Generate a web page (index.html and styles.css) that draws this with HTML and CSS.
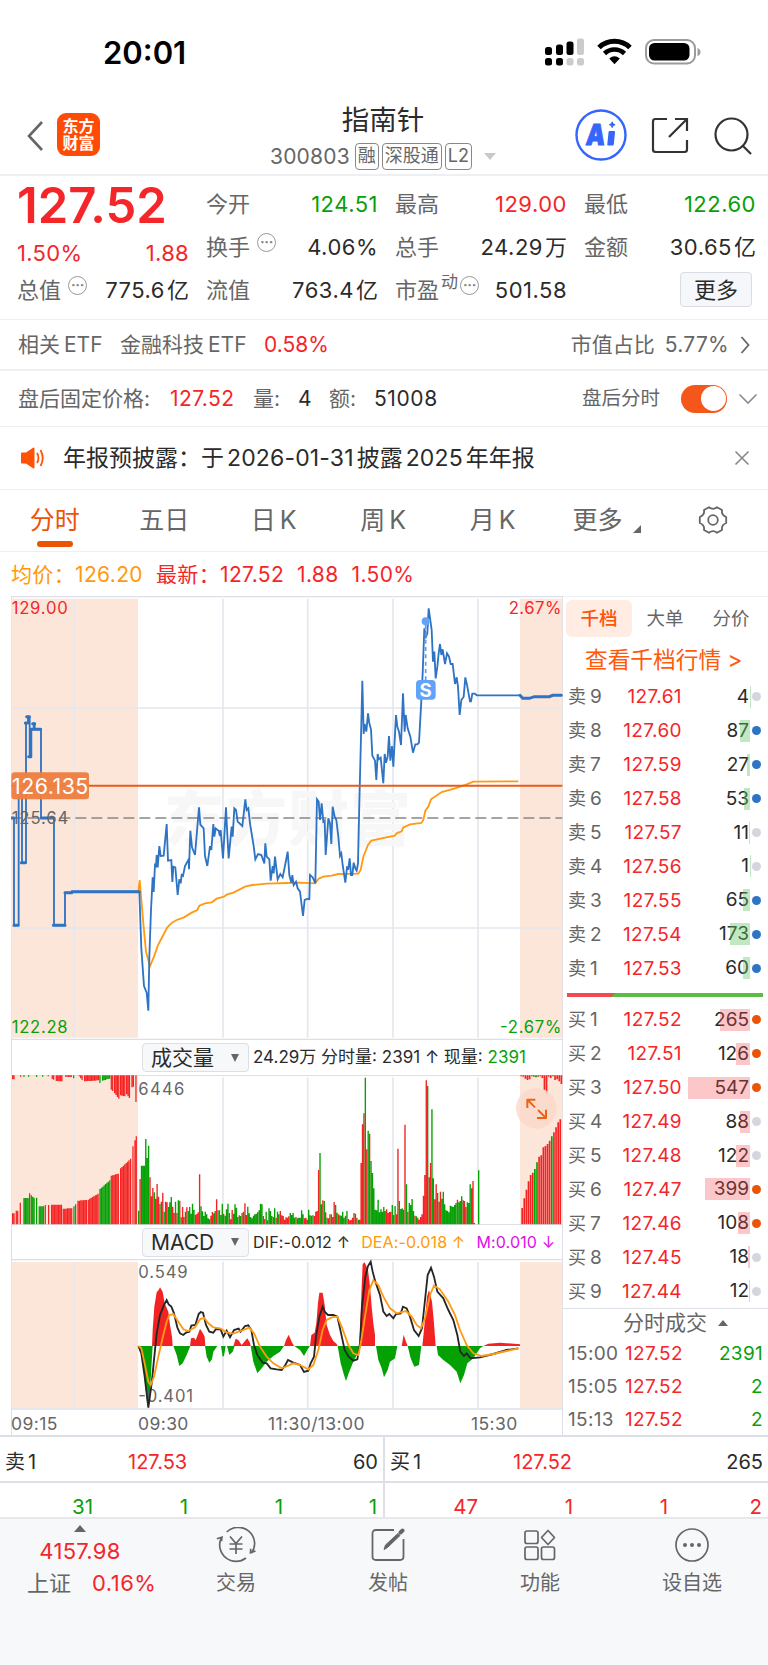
FILE: index.html
```
<!DOCTYPE html>
<html lang="zh-CN">
<head>
  <meta charset="UTF-8">
  <meta name="viewport" content="width=device-width, initial-scale=1.0">
  <title>指南针 300803</title>
  <link rel="stylesheet" href="styles.css">
</head>
<body>
  <div class="status-bar">
    <span class="clock">20:01</span>
    <svg class="status-icons" width="158" height="30" viewBox="0 0 158 30">
      <g fill="#000">
        <rect x="0" y="10" width="7" height="8" rx="2.5"/>
        <rect x="11" y="7.500" width="7" height="10.500" rx="2.500"/>
        <rect x="21.500" y="4.500" width="7" height="13.500" rx="2.500"/>
        <rect x="0" y="21" width="7" height="7.500" rx="2.500"/>
        <rect x="11" y="21" width="7" height="7.500" rx="2.500"/>
      </g>
      <g fill="#cbcbcb">
        <rect x="32" y="1.500" width="7" height="16.500" rx="2.500"/>
        <rect x="21.500" y="21" width="7" height="7.500" rx="2.500"/>
        <rect x="32" y="21" width="7" height="7.500" rx="2.500"/>
      </g>
      <path d="M54 10.500a22.500 22.500 0 0 1 31 0" fill="none" stroke="#000" stroke-width="5"/>
      <path d="M59.500 16.500a14.500 14.500 0 0 1 20 0" fill="none" stroke="#000" stroke-width="4.600"/>
      <path d="M64.200 21.500q5.300-4.500 10.600 0l-5.300 5.700z"/>
      <rect x="101" y="3" width="49" height="23.500" rx="8" fill="none" stroke="#9b9b9b" stroke-width="2"/>
      <rect x="104" y="6" width="40.500" height="17.500" rx="5.500"/>
      <path d="M152.500 11q3 1 3 4t-3 4z" fill="#9b9b9b"/>
    </svg>
  </div>

  <header class="nav-bar">
    <svg class="back" width="18" height="32" viewBox="0 0 18 32"><path d="M16 2L3 16l13 14" fill="none" stroke="#666" stroke-width="2.600"/></svg>
    <div class="logo">东方<br>财富</div>
    <div class="stock-title">
      <h1>指南针</h1>
      <div class="stock-code">
        <span class="code">300803</span>
        <span class="tag">融</span>
        <span class="tag">深股通</span>
        <span class="tag tag-l2">L2</span>
        <i class="caret-down"></i>
      </div>
    </div>
    <div class="nav-actions">
      <svg width="52" height="52" viewBox="0 0 52 52">
        <circle cx="26" cy="26" r="24.500" fill="#fff" stroke="#3565fb" stroke-width="2.400"/>
        <g transform="skewX(-6)">
          <text x="14" y="36" class="ai-text" textLength="19" lengthAdjust="spacingAndGlyphs">A</text>
          <rect x="36" y="22" width="6.500" height="14.500" rx="1" fill="#3565fb"/>
        </g>
        <path d="M37.200 12.800l.9 2 2 .9-2 .9-.9 2-.9-2-2-.9 2-.9z" fill="#3565fb" stroke="#3565fb"/>
      </svg>
      <svg width="38" height="38" viewBox="0 0 38 38" fill="none" stroke="#333" stroke-width="2.200">
        <path d="M16 2H4.500Q2 2 2 4.500v28Q2 35 4.500 35h29q2.500 0 2.500-2.500V23M36 14V2H24M36 2L18 20"/>
      </svg>
      <svg width="38" height="38" viewBox="0 0 38 38" fill="none" stroke="#333" stroke-width="2.200">
        <circle cx="17.500" cy="17.500" r="16"/><path d="M29 29l8 8"/>
      </svg>
    </div>
  </header>

  <section class="quote">
    <div class="quote-main">
      <div class="last-price">127.52</div>
      <div class="change"><span>1.50%</span><span>1.88</span></div>
      <div class="cell"><label>总值<i class="info">···</i></label><b>775.6<u>亿</u></b></div>
    </div>
    <div class="quote-col">
      <div class="cell"><label>今开</label><b class="green">124.51</b></div>
      <div class="cell"><label>换手<i class="info">···</i></label><b>4.06%</b></div>
      <div class="cell"><label>流值</label><b>763.4<u>亿</u></b></div>
    </div>
    <div class="quote-col">
      <div class="cell"><label>最高</label><b class="red">129.00</b></div>
      <div class="cell"><label>总手</label><b>24.29<u>万</u></b></div>
      <div class="cell"><label>市盈<sup>动</sup><i class="info tight">···</i></label><b>501.58</b></div>
    </div>
    <div class="quote-col">
      <div class="cell"><label>最低</label><b class="green">122.60</b></div>
      <div class="cell"><label>金额</label><b>30.65<u>亿</u></b></div>
      <div class="cell end"><button class="more-btn">更多</button></div>
    </div>
  </section>

  <section class="row etf-row">
    <span class="w-etf">相关<u>ETF</u></span>
    <span class="w-etf-name">金融科技<u>ETF</u></span>
    <span class="red">0.58%</span>
    <span class="push">市值占比</span>
    <span class="ratio">5.77%</span>
    <svg class="arrow" width="11" height="20" viewBox="0 0 11 20"><path d="M1.500 2l7 8-7 8" fill="none" stroke="#666" stroke-width="1.800"/></svg>
  </section>

  <section class="row after-row">
    <span class="w-after">盘后固定价格:</span>
    <span class="w-price red">127.52</span>
    <span class="w-vol">量:</span>
    <span class="w-num dark">4</span>
    <span class="w-amt">额:</span>
    <span class="w-total dark">51008</span>
    <span class="push small">盘后分时</span>
    <span class="switch"><i></i></span>
    <svg width="20" height="12" viewBox="0 0 20 12"><path d="M1.500 1.500L10 10l8.500-8.500" fill="none" stroke="#888c99" stroke-width="1.600"/></svg>
  </section>

  <section class="row notice-row">
    <svg width="26" height="22" viewBox="0 0 26 22">
      <path d="M1 6.500q0-1 1-1h4L13 .8q1.500-.8 1.500 1v18.400q0 1.800-1.500 1L6 16.500H2q-1 0-1-1z" fill="#ff5206"/>
      <path d="M17 6q3 5 0 10M20.500 3q4.500 8 0 16" fill="none" stroke="#ff5206" stroke-width="1.800"/>
    </svg>
    <p>年报预披露：于<em>2026-01-31</em>披露<em>2025</em>年年报</p>
    <svg class="push" width="16" height="16" viewBox="0 0 16 16"><path d="M1.500 1.500l13 13M14.500 1.500l-13 13" stroke="#888" stroke-width="1.600"/></svg>
  </section>

  <nav class="tabs">
    <a class="tab active">分时</a>
    <a class="tab">五日</a>
    <a class="tab">日<u>K</u></a>
    <a class="tab">周<u>K</u></a>
    <a class="tab">月<u>K</u></a>
    <a class="tab more">更多<i class="corner"></i></a>
    <a class="gear">
      <svg width="30" height="30" viewBox="0 0 30 30" fill="none" stroke="#666" stroke-width="1.800">
        <path d="M11 2.200Q15 5.500 19 2.200L24 5Q23.200 10 28.200 12v6Q23.200 20 24 25l-5 2.800Q15 24.500 11 27.800L6 25Q6.800 20 1.800 18v-6Q6.800 10 6 5z" stroke-linejoin="round"/>
        <circle cx="15" cy="15" r="4.800"/>
      </svg>
    </a>
  </nav>

  <div class="legend">
    <span class="orange">均价：<em>126.20</em></span>
    <span class="red">最新：<em>127.52</em></span>
    <span class="red">1.88</span>
    <span class="red">1.50%</span>
  </div>

  <main class="market">
    <div class="charts">
      <!-- price -->
      <svg class="pane" width="552" height="444" viewBox="33 18 1656 1332">
        <path d="M34 26H414V1343H34zM1560 26H1687V1343H1560z" class="session"/>
        <path d="M223 26V1343" class="grid thin"/>
        <path d="M669 26V1343M923 26V1343M1179 26V1343M1434 26V1343M34 354H1687M34 1014H1687" class="grid"/>
        <path d="M33 20H1689M33 1348H1689" class="frame"/>
        <text x="493" y="752" class="watermark" textLength="740">东方财富</text>
        <path d="M34 684H1687" class="base"/>
        <polyline class="line-avg" points="415,905 419,870 430,1000 438,1085 450,1128 462,1100 474,1065 490,1035 502,1012 516,998 530,990 552,982 575,968 592,960 598,947 615,940 635,937 650,926 672,920 680,914 700,908 712,902 735,890 757,885 800,881 860,879 900,878 945,880 956,866 970,860 995,857 1015,852 1075,851 1082,840 1090,800 1104,765 1114,752 1145,745 1184,737 1190,730 1205,724 1210,712 1230,703 1264,699 1270,690 1276,662 1285,650 1293,628 1325,606 1365,595 1400,583 1420,575 1555,574"/>
        <path class="line-price" d="M34 684H42V1006H56V605L66 612V818H78V399H84V380H89V500H94V418H101V400H104V418H123V684H162V1006H195V908H215V905H418"/>
        <path class="line-dots" d="M34 684H42M42 1006H54M64 818H76M76 399H84M80 380H88M86 500H92M94 418H122M98 401H104M123 684H162M160 1006H195M195 908H215L217 905H418"/>
        <polyline class="line-price" points="418,905 424,1075 432,1188 440,1208 445,1262 448,1100 453,960 458,862 461,906 465,825 468,828 470,795 473,832 478,768 482,798 491,797 500,702 504,812 514,810 517,876 520,830 526,832 533,915 538,868 542,880 545,855 549,858 555,828 566,808 567,838 571,722 576,772 585,795 597,652 601,704 611,715 615,798 622,828 630,768 634,780 640,702 643,740 647,715 656,722 660,738 662,720 669,805 678,652 682,735 686,805 695,710 698,740 703,655 708,660 713,695 727,708 736,628 740,660 745,655 750,700 761,768 766,808 774,792 784,795 793,820 796,760 800,800 808,808 812,872 818,828 821,850 825,800 833,868 841,852 848,862 856,822 863,785 868,855 874,878 877,855 881,885 888,875 893,895 900,905 909,978 914,930 926,925 928,930 930,855 938,862 946,880 951,628 956,635 960,690 965,640 970,695 974,692 977,795 985,685 990,700 994,762 998,650 1004,680 1009,690 1015,740 1020,798 1024,790 1028,825 1036,878 1041,832 1045,835 1049,805 1053,855 1057,855 1061,818 1066,835 1070,842 1074,820 1078,640 1084,400 1087,272 1091,432 1094,402 1099,425 1104,370 1108,400 1113,418 1117,497 1125,512 1129,570 1133,492 1136,508 1142,503 1150,580 1154,492 1158,518 1163,500 1167,438 1171,512 1176,468 1180,530 1188,375 1192,410 1197,425 1203,465 1209,310 1214,425 1217,375 1223,415 1231,440 1239,488 1246,463 1252,463 1257,458 1263,350 1268,250 1273,115 1278,140 1282,130 1286,55 1295,120 1299,215 1303,185 1307,265 1312,230 1316,190 1320,162 1324,195 1328,178 1335,222 1341,190 1347,200 1352,222 1358,222 1365,282 1370,262 1374,290 1379,375 1384,330 1391,320 1396,262 1402,290 1410,334 1413,334 1417,311 1424,311 1431,316 1560,316"/>
        <polyline class="line-dots" points="1560,316 1568,325 1588,325 1603,320 1648,320 1658,316 1684,316"/>
        <path d="M34 587H1687" class="line-alert"/>
        <text x="35" y="702" class="axis-text" textLength="170">125.64</text>
        <rect x="34" y="547" width="233" height="81" rx="10" class="alert-box"/>
        <text x="36" y="612" class="alert-text" textLength="229">126.135</text>
        <text x="35" y="72" class="axis-text up" textLength="168">129.00</text>
        <text x="1526" y="72" class="axis-text up" textLength="158">2.67%</text>
        <text x="35" y="1329" class="axis-text down" textLength="168">122.28</text>
        <text x="1500" y="1329" class="axis-text down" textLength="184">-2.67%</text>
        <!-- sell marker -->
        <path d="M1277 105V270" class="marker-line"/>
        <circle cx="1277" cy="94" r="12" class="marker"/>
        <rect x="1248" y="270" width="59" height="59" rx="12" class="marker"/>
        <text x="1277" y="320" class="marker-text">S</text>
      </svg>

      <div class="toolbar">
        <button class="picker">成交量<i></i></button>
        <span class="vol-info"><em>24.29</em>万 分时量: <em>2391</em> ↑ 现量: <em class="green">2391</em></span>
      </div>

      <!-- volume -->
      <svg class="pane" width="552" height="150" viewBox="33 103 1656 450">
        <path d="M34 104H414V551H34zM1560 104H1687V551H1560z" class="session"/>
        <path d="M223 110V551" class="grid thin"/>
        <path d="M669 110V551M923 110V551M1179 110V551M1434 110V551" class="grid"/>
        <path d="M33 104H1689M33 552H1689" class="frame"/>
        <path id="volUp" fill="#f42323"/>
        <path id="volDown" fill="#04a004"/>
        <text x="415" y="163" class="axis-text" textLength="138">6446</text>
        <circle cx="1609" cy="203" r="61" class="expand"/>
        <path d="M1582 177H1606M1582 175V202M1583 178L1605 200M1638 207V234M1638 232H1611M1636 230L1614 208" class="expand-arrows"/>
      </svg>

      <div class="toolbar">
        <button class="picker">MACD<i></i></button>
        <span class="macd-info"><span>DIF:-0.012 ↑</span><span class="orange">DEA:-0.018 ↑</span><span class="pink">M:0.010 ↓</span></span>
      </div>

      <!-- macd -->
      <svg class="pane" width="552" height="151" viewBox="33 657 1656 453">
        <path d="M34 666H414V1104H34zM1560 666H1687V1104H1560z" class="session"/>
        <path d="M223 666V1104" class="grid thin"/>
        <path d="M669 666V1104M923 666V1104M1179 666V1104M1434 666V1104" class="grid"/>
        <path d="M33 659H1689M33 1107H1689" class="frame"/>
        <path fill="#f42323" d="M456 918L458 870 463 800 470 757 476 750 480 742 488 755 494 790 505 815 510 855 516 890 518 918zM570 918L573 895 582 893 587 900 595 880 600 866 608 878 614 890 616 918zM700 918L707 896 715 900 725 915 733 905 742 895 750 908 752 918zM852 918L858 900 866 884 875 905 882 918zM930 918L934 885 944 878 949 850 954 788 958 758 968 758 974 795 980 855 990 885 1000 903 1010 912 1013 918zM1078 918L1081 850 1085 740 1088 672 1094 667 1104 690 1110 740 1115 800 1120 850 1125 885V918zM1205 918L1211 884 1217 902 1223 918zM1267 918L1271 880 1276 825 1281 770 1287 750 1296 785 1302 850 1307 918zM1450 918L1465 911 1500 908 1560 913V918z"/>
        <path fill="#04a004" d="M420 918L428 960 436 1040 442 1095 448 1085 452 1020 456 950 458 918zM520 918L530 945 538 978 548 970 560 945 571 918zM615 918L620 950 628 968 636 958 640 935 652 918zM663 918L668 950 672 948 677 918zM681 918L688 945 698 935 704 918zM752 918L760 965 772 1000 785 985 800 965 820 948 840 935 852 918zM883 918L900 930 912 948 925 925 930 918zM1013 918L1022 970 1032 1005 1038 1023 1046 1000 1060 965 1073 940 1078 918zM1128 918L1135 960 1145 985 1152 1012 1163 990 1170 965 1185 955 1192 918zM1223 918L1232 955 1243 980 1257 975 1264 918zM1310 918L1314 945 1330 960 1350 975 1370 995 1381 1030 1392 1005 1402 970 1420 955 1440 925 1450 918z"/>
        <text x="415" y="715" class="axis-text" textLength="148">0.549</text>
        <text x="415" y="1085" class="axis-text" textLength="164">-0.401</text>
        <polyline class="line-dif" points="415,918 424,940 434,1010 445,1103 455,1030 463,950 470,880 480,825 492,795 500,780 506,793 514,800 522,820 532,862 540,880 550,885 558,878 568,875 574,857 586,855 596,822 602,816 609,818 618,855 628,875 640,878 648,867 662,868 670,890 680,872 690,892 702,870 716,866 722,875 735,858 745,856 754,870 762,915 772,945 788,968 800,970 812,985 830,988 845,990 856,975 864,960 880,968 900,975 912,996 925,992 932,970 942,950 948,890 958,830 968,800 974,815 984,825 1000,825 1012,830 1020,865 1034,930 1046,950 1060,962 1072,958 1080,910 1086,800 1096,710 1104,678 1112,665 1118,695 1126,725 1140,765 1150,815 1160,828 1168,822 1180,835 1188,822 1202,820 1209,800 1220,805 1230,830 1242,870 1256,888 1266,865 1275,780 1283,705 1293,683 1302,710 1312,755 1330,775 1345,810 1360,840 1372,885 1381,935 1392,948 1400,940 1412,955 1440,952 1480,942 1520,930 1555,925"/>
        <polyline class="line-avg" points="415,918 424,925 434,970 445,1025 452,1035 462,1010 475,950 490,885 500,845 508,825 520,822 535,845 550,868 565,873 585,862 600,838 612,833 625,850 640,862 660,865 680,877 700,881 725,872 748,863 762,880 780,920 800,950 820,970 845,985 865,977 880,970 900,975 925,988 940,975 955,930 968,870 980,840 995,832 1012,830 1025,860 1045,915 1060,940 1075,945 1084,900 1095,830 1108,750 1120,721 1135,735 1150,770 1170,805 1190,820 1218,813 1235,830 1250,855 1263,865 1275,835 1290,765 1302,737 1320,748 1345,785 1365,825 1380,870 1400,915 1420,940 1445,948 1480,942 1520,933 1555,925"/>
      </svg>

      <div class="time-axis"><span>09:15</span><span>09:30</span><span>11:30/13:00</span><span>15:30</span></div>
    </div>

    <aside class="book">
      <div class="book-tabs"><span class="on">千档</span><span>大单</span><span>分价</span></div>
      <a class="book-link">查看千档行情 &gt;</a>
      <div id="asks" class="levels"></div>
      <div class="ratio-bar"><i></i></div>
      <div id="bids" class="levels"></div>
      <div class="ticks">
        <div class="ticks-head">分时成交<i></i></div>
        <div class="tick"><span>15:00</span><span class="red">127.52</span><span class="green">2391</span></div>
        <div class="tick"><span>15:05</span><span class="red">127.52</span><span class="green">2</span></div>
        <div class="tick"><span>15:13</span><span class="red">127.52</span><span class="green">2</span></div>
      </div>
    </aside>
  </main>

  <section class="best">
    <div class="best-side">
      <div class="best-row"><span>卖<em>1</em></span><span class="red">127.53</span><span>60</span></div>
      <div class="queue green"><span>31</span><span>1</span><span>1</span><span>1</span></div>
    </div>
    <div class="best-side">
      <div class="best-row"><span>买<em>1</em></span><span class="red">127.52</span><span>265</span></div>
      <div class="queue red"><span>47</span><span>1</span><span>1</span><span>2</span></div>
    </div>
  </section>

  <footer class="bottom-nav">
    <div class="index">
      <i class="caret-up"></i>
      <div class="index-value">4157.98</div>
      <div class="index-name"><span>上证</span><span class="red">0.16%</span></div>
    </div>
    <a class="nav-item">
      <svg width="40" height="36" viewBox="0 0 40 36" fill="none" stroke="#666" stroke-width="1.700">
        <path d="M10.700 5A16.400 16.400 0 0 1 35.700 26M39.500 24l-5 1.800.2-4M30 31A16.400 16.400 0 0 1 5 11.500M.8 11.800L6 10.200l-.5 4"/>
        <path d="M14 9.500l6 7 6-7M13.500 17h13M13.500 22h13M20 16.500V27"/>
      </svg>
      <span>交易</span>
    </a>
    <a class="nav-item">
      <svg width="34" height="36" viewBox="0 0 34 36" fill="none" stroke="#666" stroke-width="1.800">
        <path d="M23 3H5Q1.500 3 1.500 6.500v23Q1.500 33 5 33h24q3.500 0 3.500-3.500V12"/>
        <path d="M13 22.500l1.500-4.500L27 6.500l2 2L16.500 20.500z" fill="#666" stroke-width="1"/><path d="M29.500 5.500l2-2" stroke-width="4" stroke-linecap="round"/>
      </svg>
      <span>发帖</span>
    </a>
    <a class="nav-item">
      <svg width="34" height="36" viewBox="0 0 34 36" fill="none" stroke="#666" stroke-width="1.700">
        <rect x="2" y="4" width="13" height="12.500" rx="2"/><rect x="2" y="20" width="13" height="12.500" rx="2"/><rect x="18.500" y="20" width="13" height="12.500" rx="2"/>
        <path d="M25 3.500l6.500 7-6.500 7-6.500-7z" stroke-linejoin="round"/>
      </svg>
      <span>功能</span>
    </a>
    <a class="nav-item">
      <svg width="36" height="36" viewBox="0 0 36 36">
        <circle cx="18" cy="18" r="16" fill="none" stroke="#666" stroke-width="1.700"/>
        <circle cx="11" cy="18" r="2" fill="#666"/><circle cx="18" cy="18" r="2" fill="#666"/><circle cx="25" cy="18" r="2" fill="#666"/>
      </svg>
      <span>设自选</span>
    </a>
  </footer>

  <script src="script.js"></script>
</body>
</html>
```
FILE: script.js
```
// price, quantity, dot colour
const asks = [
  [127.61, 4, 'gray'], [127.60, 87, 'blue'], [127.59, 27, 'blue'],
  [127.58, 53, 'blue'], [127.57, 11, 'gray'], [127.56, 1, 'gray'],
  [127.55, 65, 'blue'], [127.54, 173, 'blue'], [127.53, 60, 'blue']
];
const bids = [
  [127.52, 265, 'orange'], [127.51, 126, 'orange'], [127.50, 547, 'orange'],
  [127.49, 88, 'gray'], [127.48, 122, 'gray'], [127.47, 399, 'orange'],
  [127.46, 108, 'orange'], [127.45, 18, 'gray'], [127.44, 12, 'gray']
];

function renderLevels(id, rows, label, side) {
  document.getElementById(id).innerHTML = rows.map((row, i) => {
    const n = side === 'ask' ? 9 - i : i + 1;
    return `<div class="level ${side}">
      <span class="name">${label}<em>${n}</em></span>
      <span class="price">${row[0].toFixed(2)}</span>
      <span class="qty">${row[1]}<i class="bar" style="width:${(row[1] * 0.114).toFixed(1)}px"></i></span>
      <i class="dot ${row[2]}"></i>
    </div>`;
  }).join('');
}

renderLevels('asks', asks, '卖', 'ask');
renderLevels('bids', bids, '买', 'bid');

// Negative values are falling (green) bars
const minutes = [
  -41, 136, -176, -176, -176, -256, -199, -236, 141, 84, 109, -96, 77, 121, 83, -61, 68, 95, -38, 68,
  66, -52, -66, -82, 53, 34, -68, 34, -72, 71, -21, 52, 22, -38, 51, -40, -52, -32, -62, -44,
  29, 31, 36, 150, -54, -39, -25, -38, -30, -18, -15, 26, 37, -33, -40, 75, -42, 42, -28, -62,
  32, -26, -45, -62, 34, 15, 43, -32, -60, -50, -22, 27, -25, 34, -38, 63, 28, -53, -33, -22,
  -18, -26, -30, -32, 36, -42, -62, -60, 25, 16, -38, 12, -48, -40, -25, 22, -48, 20, -38, -30,
  40, 27, 25, 14, 21, 20, 24, -34, -28, -34, -20, 22, -18, -20, -20, -42, -30, 18, 20, 14,
  -44, -27, 26, -27, 25, 38, 40, 163, -214, -60, 72, -70, 36, -20, 18, 30, -30, 22, 67, -58,
  -35, 30, -27, -26, -38, -20, 26, -40, 16, 12, 14, 20, 34, -32, 20, -14, 14, 184, 300, 333,
  -440, 225, -281, 272, -190, -154, -108, -44, -42, -74, -36, -45, -38, -52, -40, 45, 34, 37, 38, -58,
  28, -55, 30, 227, -70, -46, -48, -44, 299, -120, 38, -64, -58, -76, -40, 26, -24, 20, 14, 22,
  30, 86, 148, 432, -415, 141, 184, -345, -138, 75, 120, -94, 68, 98, -77, -98, -60, -42, -40, -36,
  -56, -54, -52, -58, -64, 74, -66, -70, -84, 72, 70, 52, -66, -64, -120, 108, 130, 4, 0, 0, -162
];

// Call auction bars: [from x, to x, height at start, height at end]
const auction = [
  [36, 46, 33, 33], [47, 57, 41, 41], [59, 63, 65, 65], [70, 85, -79, -79], [87, 90, 93, 93],
  [92, 104, -87, -80], [108, 112, -80, -80], [116, 132, -54, -54], [134, 137, 58, 58], [144, 146, 58, 58],
  [153, 187, 59, 59], [188, 218, 47, 48], [220, 223, -54, -54], [225, 230, 60, 70], [232, 262, 71, 73],
  [263, 297, 74, 92], [298, 330, -106, -132], [332, 358, 146, 152], [360, 388, 168, 192],
  [390, 396, 197, 200], [397, 402, 234, 240], [403, 406, 252, 252], [407, 410, 264, 264]
];
const hanging = [
  [36, 46, 12, 12], [60, 62, 4, 4], [70, 74, -5, -5], [84, 86, -4, -4], [108, 112, -5, -5], [126, 128, -4, -4],
  [143, 147, 3, 3], [155, 165, 11, 13], [167, 187, 17, 18], [195, 216, 4, 5], [219, 223, -9, -9],
  [236, 250, 3, 14], [252, 297, 18, 15], [298, 304, -23, -20], [306, 330, -16, -10], [332, 340, 43, 47],
  [342, 358, 54, 70], [360, 376, 60, 63], [378, 390, 57, 68], [394, 402, 36, 34], [406, 410, 80, 80]
];
const closing = [49, 78, 104, 129, 148, 155, -166, -186, 203, 207, 231, 235, 241, 251, -264, 276, 291, 306, 315];
const closingTop = [3, 4, 10, 14, 12, 3, -4, -6, 4, 3, 8, 44, 54, 4, 8, -3, 14, 12, 18, 26];

let up = '';
let down = '';

function bar(x, width, height, fromTop) {
  const h = Math.abs(height);
  const d = `M${x.toFixed(1)} ${fromTop ? 104 : 551 - h}h${width}v${h}h${-width}z`;
  if (height < 0) {
    down += d;
  } else {
    up += d;
  }
}

function steps(list, fromTop) {
  list.forEach(([from, to, h1, h2]) => {
    const count = Math.max(1, Math.round((to - from) / 4.2));
    for (let i = 0; i < count; i++) {
      bar(from + i * 4.2, 3.8, Math.round(h1 + (h2 - h1) * i / Math.max(1, count - 1)), fromTop);
    }
  });
}

minutes.forEach((h, i) => bar(414 + i * 4.25, 4.1, h));
steps(auction, false);
steps(hanging, true);
closing.forEach((h, i) => bar(1564 + i * 6.35, 5, h));
closingTop.forEach((h, i) => bar(1561 + i * 6.35, 5, h, true));

document.getElementById('volUp').setAttribute('d', up);
document.getElementById('volDown').setAttribute('d', down);
```
FILE: styles.css
```
:root {
  --red: #f4262a;
  --green: #0a9f0a;
  --orange: #ff9a0a;
  --brand: #eb5406;
  --text: #2b2b2b;
  --muted: #666;
  --line: #eeeff2;
  --frame: #dcdfe6;
}

* {
  margin: 0;
  padding: 0;
  box-sizing: border-box;
}

body {
  width: 768px;
  height: 1665px;
  overflow: hidden;
  background: #fff;
  color: var(--muted);
  font-family: Inter, "Noto Sans CJK SC", sans-serif;
  font-size: 21px;
  line-height: 1;
}

em, i, u {
  font-style: normal;
  text-decoration: none;
}

svg { display: block; flex: none; }

.red { color: var(--red) !important; }
.green { color: var(--green) !important; }
.orange { color: var(--orange) !important; }
.pink { color: #e010e6; }
.dark { color: var(--text); }
.push { margin-left: auto; }

/* Status bar */
.status-bar {
  height: 97px;
  padding: 37px 65px 0 103px;
  display: flex;
  justify-content: space-between;
}

.clock {
  color: #000;
  font-size: 31px;
  font-weight: 600;
  line-height: 31px;
}

/* Title bar */
.nav-bar {
  height: 79px;
  border-bottom: 2px solid var(--line);
  display: flex;
  padding-left: 26px;
}

.back { margin-top: 23px; }

.logo {
  flex: none;
  width: 43px;
  height: 43px;
  margin: 16px 0 0 13px;
  padding-top: 5px;
  border-radius: 9px;
  background: #ff4b05;
  color: #fff;
  font-size: 16px;
  font-weight: 700;
  line-height: 17px;
  text-align: center;
}

.stock-title {
  flex: none;
  width: 226px;
  margin-left: 170px;
  white-space: nowrap;
}

.stock-title h1 {
  margin: 8px 0 8px;
  color: #2c2c2c;
  font-size: 27.500px;
  font-weight: 400;
  line-height: 30px;
  text-align: center;
}

.stock-code {
  display: flex;
  align-items: center;
}

.code {
  width: 86px;
  font-size: 21px;
  letter-spacing: .2px;
}

.tag {
  height: 27px;
  margin-right: 3px;
  padding: 0 2px;
  border: 1.500px solid #888;
  border-radius: 4px;
  font-size: 18px;
  line-height: 24px;
}

.tag-l2 { font-size: 18px; }

.caret-down {
  margin-left: 9px;
  border: 6px solid transparent;
  border-top: 7px solid #c9c9c9;
  border-bottom: 0;
}

.nav-actions {
  display: flex;
  margin-left: 79px;
  gap: 24px;
}

.nav-actions svg { margin-top: 20px; }
.nav-actions svg:first-child { margin-top: 12px; }
.nav-actions svg:last-child { margin-left: 1px; }

.ai-text {
  fill: #3565fb;
  stroke: #3565fb;
  stroke-width: 1px;
  font-size: 29px;
  font-weight: 900;
}

/* Quote */
.quote {
  height: 144px;
  padding: 6px 12px 0 17px;
  display: grid;
  grid-template-columns: 172px 172px 172px 172px;
  column-gap: 17px;
  border-bottom: 1px solid var(--line);
}

.cell {
  height: 43px;
  display: flex;
  justify-content: space-between;
  align-items: center;
  white-space: nowrap;
}

.cell label {
  display: flex;
  align-items: center;
  font-size: 22px;
}

.cell b {
  color: var(--text);
  font-size: 22px;
  font-weight: 400;
  letter-spacing: .5px;
}

.cell b u { margin-left: 2px; letter-spacing: 0; }
.cell.end { justify-content: flex-end; }

.cell sup {
  margin: -15px 0 0 2px;
  font-size: 17px;
}

.info {
  width: 19px;
  height: 19px;
  margin: -8px 0 0 7px;
  border: 1.500px solid #999;
  border-radius: 50%;
  color: #888;
  font-size: 14px;
  font-weight: 700;
  line-height: 16px;
  letter-spacing: -.3px;
  text-align: center;
}

.info.tight { margin-left: 2px; }

.last-price {
  height: 50px;
  color: var(--red);
  font-size: 49px;
  font-weight: 600;
  line-height: 48px;
}

.change {
  height: 36px;
  display: flex;
  justify-content: space-between;
  align-items: center;
  padding-top: 5px;
  color: var(--red);
  font-size: 22px;
  letter-spacing: .3px;
}

.more-btn {
  width: 72px;
  height: 35px;
  margin-right: 4px;
  border: 1.500px solid #d9dce2;
  border-radius: 4px;
  background: #f6f7fa;
  color: var(--text);
  font: 22px/30px Inter, "Noto Sans CJK SC", sans-serif;
}

/* Info rows */
.row {
  display: flex;
  align-items: center;
  padding: 0 10px 0 18px;
  border-bottom: 1px solid var(--line);
  font-size: 21px;
  white-space: nowrap;
}

.row u { margin-left: 4px; }

.etf-row { height: 51px; border-bottom-width: 2px; }
.w-etf { width: 102px; }
.w-etf-name { width: 144px; }
.ratio { margin-left: 10px; letter-spacing: .3px; }
.arrow { margin: 0 7px 0 11px; }

.after-row { height: 56px; }
.w-after { width: 152px; }
.w-price { width: 83px; letter-spacing: .4px; }
.w-vol { width: 45px; }
.w-num { width: 31px; }
.w-amt { width: 45px; }
.w-total { letter-spacing: .6px; }
.small { font-size: 19.500px; }

.switch {
  width: 46px;
  height: 28px;
  margin: 0 11px 0 21px;
  padding: 1.500px;
  border-radius: 14px;
  background: #f5571a;
}

.switch i {
  display: block;
  width: 25px;
  height: 25px;
  margin-left: auto;
  border-radius: 50%;
  background: #fff;
}

.notice-row { height: 63px; padding-left: 20px; padding-right: 18px; }

.notice-row p {
  margin-left: 17px;
  color: var(--text);
  font-size: 23px;
}

.notice-row em { margin: 0 3px; letter-spacing: .15px; }

/* Period tabs */
.tabs {
  height: 62px;
  display: flex;
  border-bottom: 1px solid var(--line);
}

.tab {
  width: 109.500px;
  position: relative;
  font-size: 25px;
  line-height: 61px;
  text-align: center;
}

.tab u { margin-left: 4px; }

.tab.more { width: 110px; padding-right: 10px; }

.tab.active { color: var(--brand); }

.tab.active::after {
  content: "";
  position: absolute;
  left: 37px;
  bottom: 4px;
  width: 36px;
  height: 6px;
  border-radius: 3px;
  background: var(--brand);
}

.corner {
  position: absolute;
  right: 17px;
  bottom: 18px;
  border-left: 8px solid transparent;
  border-bottom: 8px solid var(--muted);
}

.gear { margin: 15px 0 0 40px; }

.legend {
  height: 44px;
  display: flex;
  align-items: center;
  padding-left: 11px;
  gap: 13px;
  font-size: 21px;
  letter-spacing: .35px;
  white-space: nowrap;
}

/* Charts */
.market {
  height: 841px;
  display: flex;
  padding-left: 11px;
  border-bottom: 2px solid var(--frame);
}

.charts {
  width: 552px;
  border-left: 1px solid var(--frame);
  border-right: 1px solid var(--frame);
}

.pane { margin-left: -1px; }

.session { fill: #fce6da; }
.grid { stroke: #e4e7ee; stroke-width: 5px; }
.grid.thin { stroke-width: 3px; }
.frame { stroke: #dcdfe6; stroke-width: 4px; }
.base { stroke: #888; stroke-width: 5px; stroke-dasharray: 33 15; }

.watermark {
  fill: #f7f7f8;
  font-size: 182px;
  font-weight: 900;
}

.line-avg, .line-price, .line-dots, .line-dif {
  fill: none;
  stroke-width: 5.500px;
}

.line-avg { stroke: #ff9a12; }
.line-price { stroke: #2f74c4; }
.line-dots { stroke: #2f74c4; stroke-width: 9px; stroke-linecap: round; }
.line-dif { stroke: #262626; }
.line-alert { stroke: #e85b1b; stroke-width: 6px; }

.axis-text {
  fill: #666;
  font-size: 50px;
}

.axis-text.up { fill: var(--red); }
.axis-text.down { fill: var(--green); }

.alert-box { fill: #ee7f41; fill-opacity: .96; }
.alert-text { fill: #fff; font-size: 64px; }

.marker { fill: #62a2f8; }
.marker-line { stroke: #5a9df5; stroke-width: 5px; stroke-dasharray: 12 10; }

.marker-text {
  fill: #fff;
  font-size: 56px;
  font-weight: 700;
  text-anchor: middle;
}

.expand { fill: #fad9c8; fill-opacity: .8; }
.expand-arrows { fill: none; stroke: #ef6113; stroke-width: 6px; }

.toolbar {
  height: 34.500px;
  display: flex;
  align-items: center;
  padding: 1px 0 0 130px;
  white-space: nowrap;
}

.picker {
  width: 107px;
  height: 29px;
  display: flex;
  justify-content: space-between;
  align-items: center;
  padding: 0 9px 0 8px;
  border: 1.500px solid #dcdfe5;
  border-radius: 4px;
  background: #f7f8fa;
  color: var(--text);
  font: 21px/25px Inter, "Noto Sans CJK SC", sans-serif;
}

.picker i {
  border: 4.500px solid transparent;
  border-top: 8px solid #666;
  border-bottom: 0;
}

.vol-info {
  margin-left: 4px;
  color: var(--text);
  font-size: 17px;
}

.macd-info {
  display: flex;
  gap: 11px;
  margin-left: 4px;
  color: var(--text);
  font-size: 16px;
  letter-spacing: .15px;
}

.time-axis {
  height: 28px;
  display: grid;
  grid-template-columns: 127px 130px 203px auto;
  align-items: center;
  margin-left: -1px;
  font-size: 17.500px;
  letter-spacing: .4px;
}

/* Order book */
.book {
  width: 205px;
  border-top: 1px solid var(--line);
}

.book-tabs {
  display: flex;
  height: 40px;
  padding: 3px 0 0 3px;
  font-size: 18.500px;
  line-height: 36px;
  text-align: center;
}

.book-tabs span { width: 66px; }

.book-tabs .on {
  border-radius: 6px;
  background: #ffece3;
  color: #ff5206;
  font-weight: 500;
}

.book-link {
  display: block;
  height: 43px;
  padding-left: 22px;
  color: #ff5a0c;
  font-size: 22.700px;
  line-height: 45px;
  white-space: nowrap;
}

.level {
  height: 33.900px;
  display: flex;
  align-items: center;
  padding-left: 5px;
}

.level .name { width: 40px; font-size: 18px; }
.level .name em { margin-left: 4px; font-size: 19px; }

.level .price {
  width: 74px;
  color: var(--red);
  font-size: 19px;
  letter-spacing: .4px;
  text-align: right;
}

.level .qty {
  width: 67px;
  height: 22px;
  position: relative;
  color: var(--text);
  font-size: 19px;
  line-height: 22px;
  text-align: right;
}

.bar {
  position: absolute;
  top: 0;
  right: -1px;
  height: 22px;
}

.ask .bar { background: rgba(100, 200, 100, .4); }
.bid .bar { background: rgba(245, 70, 75, .3); }

.dot {
  width: 9px;
  height: 9px;
  margin-left: 3px;
  border-radius: 50%;
}

.dot.gray { background: #d3d6dc; }
.dot.blue { background: #2f74c4; }
.dot.orange { background: #eb5406; }

.ratio-bar {
  height: 4px;
  margin: 8px 5px 6px 4px;
  background: #5cbc46;
}

.ratio-bar i {
  display: block;
  width: 48px;
  height: 4px;
  background: #f04b50;
  clip-path: polygon(0 0, 100% 0, 93% 100%, 0 100%);
}

.ticks { border-top: 1.500px solid var(--frame); }

.ticks-head {
  height: 28px;
  display: flex;
  align-items: center;
  padding: 0 0 1px 60px;
  font-size: 21px;
}

.ticks-head i {
  margin-left: 11px;
  border: 5px solid transparent;
  border-top: 0;
  border-bottom: 6px solid #666;
}

.tick {
  height: 32.900px;
  display: flex;
  align-items: center;
  padding: 0 5px;
  font-size: 19px;
  letter-spacing: .3px;
}

.tick span:first-child { width: 57px; }
.tick span:last-child { margin-left: auto; }

/* Best bid / ask */
.best {
  height: 80px;
  display: flex;
}

.best-side { width: 383px; }
.best-side + .best-side { width: 385px; border-left: 2px solid var(--frame); }

.best-row {
  height: 46px;
  display: grid;
  grid-template-columns: 123px 70px 1fr;
  align-items: center;
  padding: 5px 5px 0 5px;
  border-bottom: 2px solid var(--frame);
  color: var(--text);
  font-size: 20px;
}

.best-row em { margin-left: 3px; }
.best-row span:last-child { text-align: right; }

.queue {
  display: grid;
  grid-template-columns: 93px 95px 95px 94px;
  padding-top: 15px;
  font-size: 20.500px;
  line-height: 17px;
  text-align: right;
}

/* Bottom navigation */
.bottom-nav {
  height: 149px;
  display: flex;
  border-top: 2px solid #e6e8ec;
  background: #f7f8fa;
}

.index { width: 160px; }

.caret-up {
  display: block;
  width: 12px;
  margin: 6px auto 7px;
  border: 6px solid transparent;
  border-top: 0;
  border-bottom: 7px solid var(--muted);
}

.index-value {
  color: var(--red);
  font-size: 22px;
  letter-spacing: .3px;
  line-height: 24px;
  text-align: center;
}

.index-name {
  display: flex;
  align-items: center;
  margin-top: 9px;
  padding-left: 27px;
  gap: 21px;
  font-size: 22px;
}

.index-name .red { letter-spacing: .5px; }

.nav-item {
  width: 152px;
  display: flex;
  flex-direction: column;
  align-items: center;
  padding-top: 8px;
  font-size: 20px;
}

.nav-item span { margin-top: 9px; line-height: 22px; }
```
